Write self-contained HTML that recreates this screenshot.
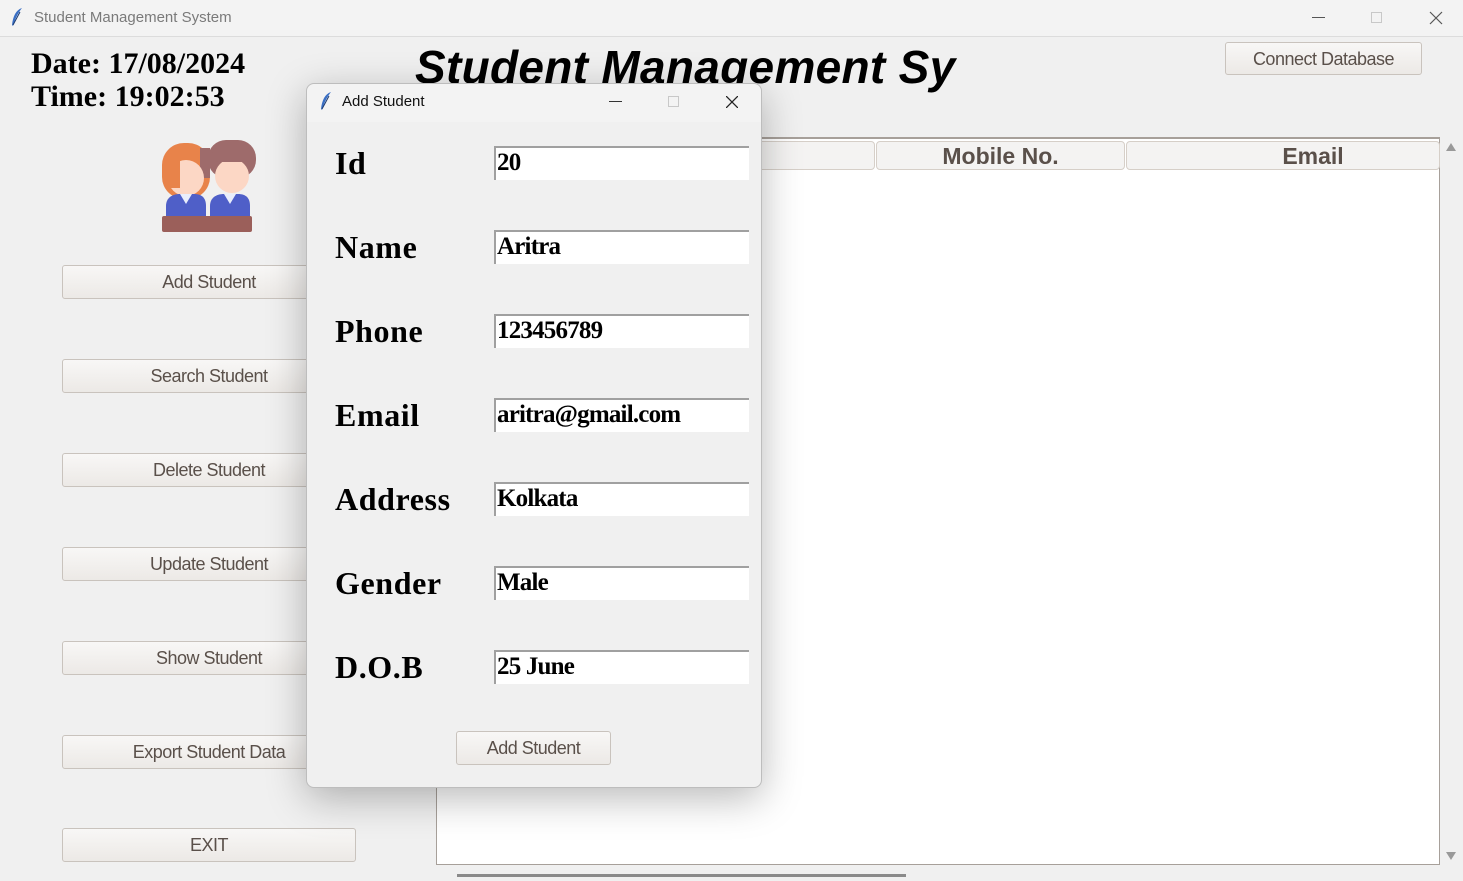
<!DOCTYPE html>
<html><head><meta charset="utf-8"><style>
*{margin:0;padding:0;box-sizing:border-box}
body{width:1463px;height:881px;background:#f0f0f0;position:relative;overflow:hidden;font-family:"Liberation Sans",sans-serif}
.abs{position:absolute}
.tb{top:0;left:0;width:1463px;height:37px;background:#f3f3f3;border-bottom:1px solid #dcdcdc}
.btn{position:absolute;left:62px;width:294px;height:34px;border:1px solid #c9c3bd;border-radius:3px;background:linear-gradient(#f8f7f6,#ece9e6);color:#5a504a;font-size:18px;text-align:center;line-height:32px;letter-spacing:-0.5px}
.lbl{position:absolute;left:335px;font:bold 32px "Liberation Serif",serif;color:#000;letter-spacing:0.6px}
.ent{position:absolute;left:494px;width:255px;height:34px;background:#fff;border-top:2px solid #a0a0a0;border-left:2px solid #a0a0a0;font:bold 25px "Liberation Serif",serif;color:#000;padding-left:1px;line-height:30px;letter-spacing:-0.8px}
.th{position:absolute;top:141px;height:29px;border:1px solid #d6cfc8;border-radius:4px;background:#f4f3f2;color:#5a504a;font:bold 23px "Liberation Sans",sans-serif;text-align:center;line-height:28px}
</style></head><body>
<div class="abs tb"></div>
<svg class="abs" style="left:10px;top:7px" width="14" height="20" viewBox="0 0 14 20"><path d="M12 1C6 3 3 9 2 18l1 1C5 12 8 6 12 1z" fill="#3a6fc4"/><path d="M3 18L10 5" stroke="#1d3b70" stroke-width="1"/></svg>
<div class="abs" style="left:34px;top:9px;font-size:15px;color:#7a7a7a">Student Management System</div>
<div class="abs" style="left:1312px;top:17px;width:13px;height:1px;background:#555"></div>
<div class="abs" style="left:1371px;top:12px;width:11px;height:11px;border:1px solid #c8c8c8"></div>
<svg class="abs" style="left:1429px;top:11px" width="14" height="14"><path d="M1 1L13 13M13 1L1 13" stroke="#555" stroke-width="1.2"/></svg>

<div class="abs" style="left:31px;top:47px;font:bold 30px 'Liberation Serif',serif;line-height:33px">Date: 17/08/2024<br>Time: 19:02:53</div>
<div class="abs" style="left:415px;top:40px;font:italic bold 46px 'Liberation Sans',sans-serif;white-space:nowrap;letter-spacing:0.3px">Student Management Sy</div>
<div class="btn" style="left:1225px;top:42px;width:197px;height:33px">Connect Database</div>

<svg class="abs" style="left:160px;top:138px" width="98" height="96" viewBox="0 0 98 96">
<rect x="2" y="5" width="48" height="56" rx="22" fill="#e8834a"/>
<rect x="48" y="2" width="48" height="38" rx="18" fill="#9e6b6b"/>
<rect x="40" y="10" width="10" height="30" fill="#9e6b6b"/>
<circle cx="26" cy="40" r="18" fill="#fcd7c5"/>
<circle cx="72" cy="38" r="17" fill="#fcd7c5"/>
<rect x="52" y="10" width="40" height="14" rx="6" fill="#9e6b6b"/>
<rect x="8" y="18" width="12" height="32" fill="#e8834a"/>
<path d="M6 80v-12c0-8 6-12 14-12h14c8 0 12 4 12 12v12z" fill="#4f5fc8"/>
<path d="M50 80v-12c0-8 6-12 14-12h14c8 0 12 4 12 12v12z" fill="#4f5fc8"/>
<path d="M20 56l6 10 6-10z" fill="#e9eefc"/><path d="M64 56l6 10 6-10z" fill="#e9eefc"/>
<rect x="2" y="78" width="90" height="16" rx="2" fill="#9b5f5a"/>
</svg>

<div class="btn" style="top:265px">Add Student</div>
<div class="btn" style="top:359px">Search Student</div>
<div class="btn" style="top:453px">Delete Student</div>
<div class="btn" style="top:547px">Update Student</div>
<div class="btn" style="top:641px">Show Student</div>
<div class="btn" style="top:735px">Export Student Data</div>
<div class="btn" style="top:828px">EXIT</div>

<div class="abs" style="left:436px;top:137px;width:1004px;height:728px;background:#fff;border:1px solid #a7a09a;border-top:2px solid #a7a09a"></div>
<div class="th" style="left:740px;width:135px"></div>
<div class="th" style="left:876px;width:249px">Mobile No.</div>
<div class="th" style="left:1126px;width:314px;padding-left:60px">Email</div>
<div class="abs" style="left:1446px;top:143px;width:0;height:0;border-left:5px solid transparent;border-right:5px solid transparent;border-bottom:8px solid #999"></div>
<div class="abs" style="left:1446px;top:852px;width:0;height:0;border-left:5px solid transparent;border-right:5px solid transparent;border-top:8px solid #999"></div>
<div class="abs" style="left:457px;top:874px;width:449px;height:3px;background:#8a8a8a"></div>

<div class="abs" style="left:306px;top:83px;width:456px;height:705px;background:#f0f0f0;border:1px solid #bdbdbd;border-radius:8px;box-shadow:0 10px 40px rgba(0,0,0,0.28)"></div>
<div class="abs" style="left:307px;top:84px;width:454px;height:38px;background:#f3f3f3;border-radius:8px 8px 0 0"></div>
<svg class="abs" style="left:319px;top:91px" width="14" height="20" viewBox="0 0 14 20"><path d="M12 1C6 3 3 9 2 18l1 1C5 12 8 6 12 1z" fill="#3a6fc4"/><path d="M3 18L10 5" stroke="#1d3b70" stroke-width="1"/></svg>
<div class="abs" style="left:342px;top:93px;font-size:15px;color:#111">Add Student</div>
<div class="abs" style="left:609px;top:101px;width:13px;height:1px;background:#333"></div>
<div class="abs" style="left:668px;top:96px;width:11px;height:11px;border:1px solid #c8c8c8"></div>
<svg class="abs" style="left:726px;top:96px" width="12" height="12"><path d="M0 0L12 12M12 0L0 12" stroke="#222" stroke-width="1.3"/></svg>

<div class="lbl" style="top:145px">Id</div>
<div class="lbl" style="top:229px">Name</div>
<div class="lbl" style="top:313px">Phone</div>
<div class="lbl" style="top:397px">Email</div>
<div class="lbl" style="top:481px">Address</div>
<div class="lbl" style="top:565px">Gender</div>
<div class="lbl" style="top:649px">D.O.B</div>
<div class="ent" style="top:146px">20</div>
<div class="ent" style="top:230px">Aritra</div>
<div class="ent" style="top:314px">123456789</div>
<div class="ent" style="top:398px">aritra@gmail.com</div>
<div class="ent" style="top:482px">Kolkata</div>
<div class="ent" style="top:566px">Male</div>
<div class="ent" style="top:650px">25 June</div>
<div class="btn" style="left:456px;top:731px;width:155px;height:34px">Add Student</div>
</body></html>
